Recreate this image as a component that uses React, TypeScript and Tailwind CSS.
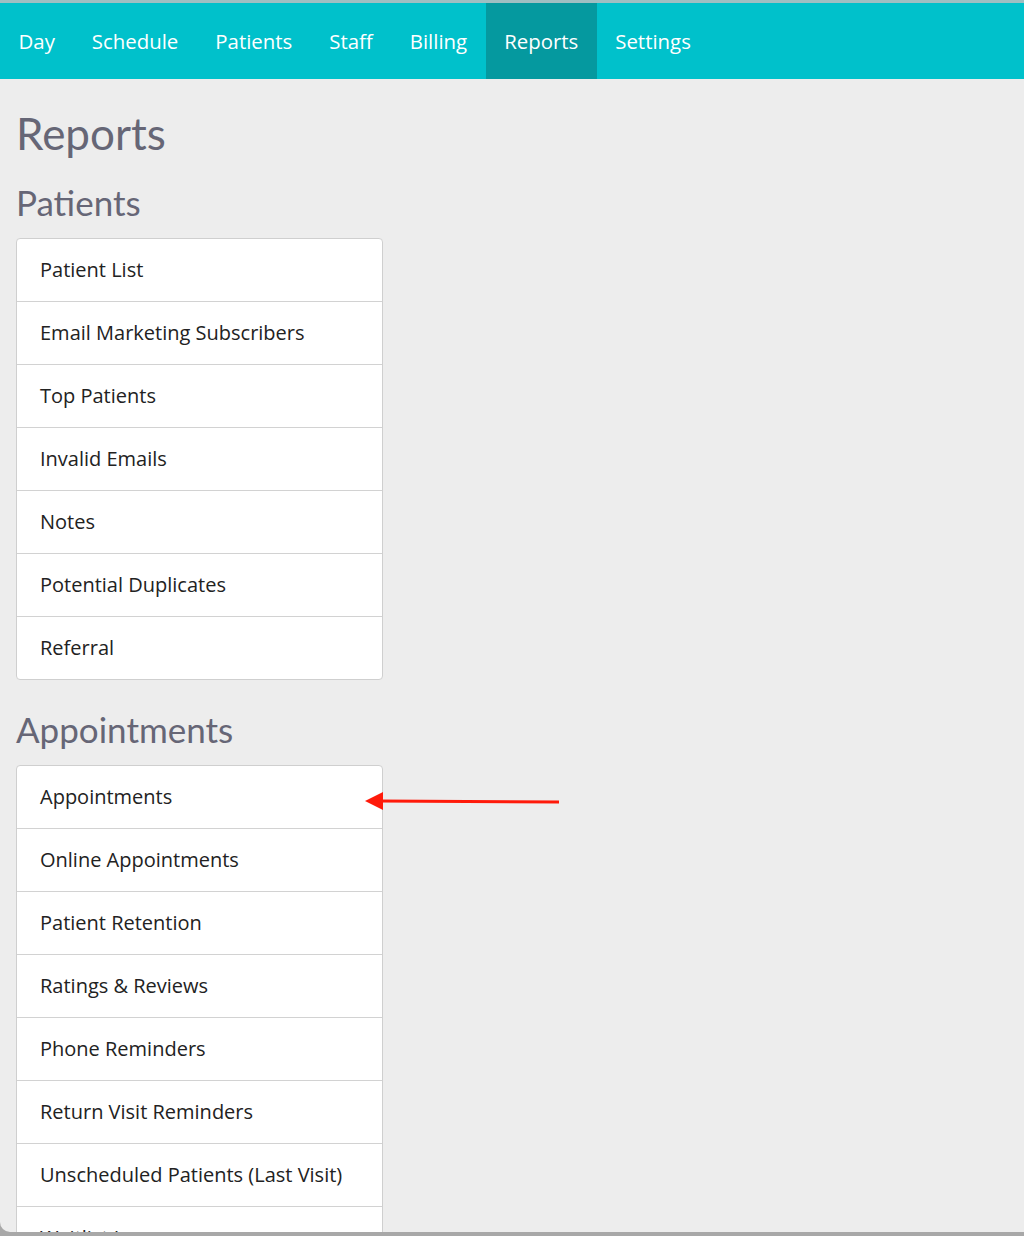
import React from "react";

const nav = ["Day", "Schedule", "Patients", "Staff", "Billing", "Reports", "Settings"];
const patients = [
  "Patient List",
  "Email Marketing Subscribers",
  "Top Patients",
  "Invalid Emails",
  "Notes",
  "Potential Duplicates",
  "Referral",
];
const appointments = [
  "Appointments",
  "Online Appointments",
  "Patient Retention",
  "Ratings & Reviews",
  "Phone Reminders",
  "Return Visit Reminders",
  "Unscheduled Patients (Last Visit)",
  "Waitlist Log",
];

function Card({ items }: { items: string[] }) {
  return (
    <div className="w-[367px] bg-white border border-[#cfcfcf] rounded-[4px]">
      {items.map((t, i) => (
        <div
          key={t}
          className={
            "flex items-center pl-[23px] text-[20px] text-[#222222] font-['Open_Sans',sans-serif] " +
            (i > 0 ? "h-[63px] border-t border-[#d2d2d2]" : "h-[62px]")
          }
        >
          {t}
        </div>
      ))}
    </div>
  );
}

export default function App() {
  return (
    <div
      className="w-[1024px] h-[1236px] bg-[#a8a8a8] overflow-hidden"
      style={{ fontFamily: "Lato, 'Noto Sans', sans-serif" }}
    >
      <div className="relative h-[1232px] bg-[#ededed] rounded-bl-[10px] overflow-hidden border-t-[3px] border-[#9fbfc2]">
        <nav className="h-[76px] bg-[#00c1cb] flex font-['Open_Sans',sans-serif]">
          {nav.map((n) => (
            <div
              key={n}
              className={
                "h-full flex items-center px-[18.5px] text-[20.4px] text-white " +
                (n === "Reports" ? "bg-[#05999f]" : "")
              }
            >
              {n}
            </div>
          ))}
        </nav>
        <div className="pl-[16px]">
          <h1 className="text-[44px] leading-none text-[#666676] pt-[32px]">Reports</h1>
          <h2 className="text-[35px] leading-none text-[#666676] mt-[30px]">Patients</h2>
          <div className="mt-[18px]">
            <Card items={patients} />
          </div>
          <h2 className="text-[35px] leading-none text-[#666676] mt-[32px]">Appointments</h2>
          <div className="mt-[18px]">
            <Card items={appointments} />
          </div>
        </div>
        <svg
          className="absolute left-[362px] top-[786px]"
          width="200"
          height="24"
          viewBox="0 0 200 24"
        >
          <line x1="18" y1="12" x2="197" y2="13" stroke="#ff1a0a" strokeWidth="3" />
          <polygon points="3,12 21,3 21,21" fill="#ff1a0a" />
        </svg>
      </div>
    </div>
  );
}
